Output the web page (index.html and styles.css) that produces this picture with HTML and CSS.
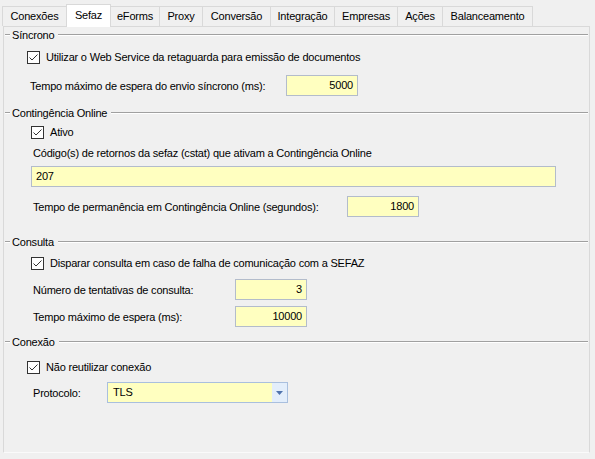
FILE: index.html
```html
<!DOCTYPE html>
<html lang="pt-BR">
<head>
<meta charset="utf-8">
<title>Configurações - Sefaz</title>
<link rel="stylesheet" href="styles.css">
</head>
<body>
<div class="window">
  <div class="tabs">
    <div class="tab w-conexoes">Conexões</div>
    <div class="tab tab-active w-sefaz">Sefaz</div>
    <div class="tab w-eforms">eForms</div>
    <div class="tab w-proxy">Proxy</div>
    <div class="tab w-conversao">Conversão</div>
    <div class="tab w-integracao">Integração</div>
    <div class="tab w-empresas">Empresas</div>
    <div class="tab w-acoes">Ações</div>
    <div class="tab tab-last w-balanc">Balanceamento</div>
  </div>
  <div class="panel">
    <div class="group-head"><span class="dash"></span><span class="group-title">Síncrono</span><span class="rule"></span></div>
    <div class="check-row mt-6 ind-23">
      <svg class="cb" width="13" height="13" viewBox="0 0 13 13"><rect x="0.5" y="0.5" width="12" height="12" fill="#fff" stroke="#333"/><path d="M2.5 6.5 L5 9 L10.5 3.5" fill="none" stroke="#333"/></svg>
      <span class="cb-label">Utilizar o Web Service da retaguarda para emissão de documentos</span>
    </div>
    <div class="field-row mt-10 ind-26">
      <span class="label lw-256">Tempo máximo de espera do envio síncrono (ms):</span>
      <div class="textbox num w-72">5000</div>
    </div>

    <div class="group-head mt-9"><span class="dash"></span><span class="group-title">Contingência Online</span><span class="rule"></span></div>
    <div class="check-row mt-3 ind-27">
      <svg class="cb" width="13" height="13" viewBox="0 0 13 13"><rect x="0.5" y="0.5" width="12" height="12" fill="#fff" stroke="#333"/><path d="M2.5 6.5 L5 9 L10.5 3.5" fill="none" stroke="#333"/></svg>
      <span class="cb-label">Ativo</span>
    </div>
    <div class="text-row mt-5 ind-29">Código(s) de retornos da sefaz (cstat) que ativam a Contingência Online</div>
    <div class="field-row mt-5 ind-27">
      <div class="textbox w-525">207</div>
    </div>
    <div class="field-row mt-9 ind-29">
      <span class="label lw-314">Tempo de permanência em Contingência Online (segundos):</span>
      <div class="textbox num w-72">1800</div>
    </div>

    <div class="group-head mt-17"><span class="dash"></span><span class="group-title">Consulta</span><span class="rule"></span></div>
    <div class="check-row mt-5 ind-27">
      <svg class="cb" width="13" height="13" viewBox="0 0 13 13"><rect x="0.5" y="0.5" width="12" height="12" fill="#fff" stroke="#333"/><path d="M2.5 6.5 L5 9 L10.5 3.5" fill="none" stroke="#333"/></svg>
      <span class="cb-label">Disparar consulta em caso de falha de comunicação com a SEFAZ</span>
    </div>
    <div class="field-row mt-8 ind-29">
      <span class="label lw-202">Número de tentativas de consulta:</span>
      <div class="textbox num w-72">3</div>
    </div>
    <div class="field-row mt-6 ind-29">
      <span class="label lw-202">Tempo máximo de espera (ms):</span>
      <div class="textbox num w-72">10000</div>
    </div>

    <div class="group-head mt-7"><span class="dash"></span><span class="group-title">Conexão</span><span class="rule"></span></div>
    <div class="check-row mt-9 ind-23">
      <svg class="cb" width="13" height="13" viewBox="0 0 13 13"><rect x="0.5" y="0.5" width="12" height="12" fill="#fff" stroke="#333"/><path d="M2.5 6.5 L5 9 L10.5 3.5" fill="none" stroke="#333"/></svg>
      <span class="cb-label">Não reutilizar conexão</span>
    </div>
    <div class="field-row mt-7 ind-29">
      <span class="label lw-74">Protocolo:</span>
      <div class="combo">
        <span class="combo-text">TLS</span>
        <span class="combo-btn"><svg width="7" height="4" viewBox="0 0 7 4"><path d="M0 0 H7 L3.5 4 Z" fill="#4f73ad"/></svg></span>
      </div>
    </div>
  </div>
</div>
</body>
</html>
```

FILE: styles.css
```css
body {
  margin: 0;
  background: #f0f0f0;
  font-family: "Liberation Sans", Arial, sans-serif;
  font-size: 11px;
  letter-spacing: -0.2px;
  color: #000;
}

.window {
  width: 595px;
  height: 459px;
}

/* Tabs */
.tabs {
  display: flex;
  align-items: flex-end;
  height: 26px;
  padding-left: 2px;
}

.tab {
  box-sizing: border-box;
  height: 20px;
  line-height: 19px;
  text-align: center;
  border-top: 1px solid #d9d9d9;
  border-left: 1px solid #d9d9d9;
  background: #f0f0f0;
  white-space: nowrap;
}

.tab-last {
  border-right: 1px solid #d9d9d9;
}

.tab-active {
  position: relative;
  z-index: 1;
  height: 23px;
  margin-bottom: -1px;
  line-height: 21px;
  background: #fff;
  border-right: 1px solid #d9d9d9;
}

.tab-active + .tab {
  margin-left: -1px;
}

.w-conexoes { width: 64px; }
.w-sefaz { width: 45px; }
.w-eforms { width: 49px; }
.w-proxy { width: 43px; }
.w-conversao { width: 68px; }
.w-integracao { width: 64px; }
.w-empresas { width: 63px; }
.w-acoes { width: 45px; }
.w-balanc { width: 91px; }

/* Panel */
.panel {
  box-sizing: border-box;
  margin-left: 3px;
  width: 587px;
  height: 427px;
  border: 1px solid #d9d9d9;
  border-bottom-color: #fafafa;
  background: #f0f0f0;
}

/* Group header (etched line with caption) */
.group-head {
  display: flex;
  align-items: center;
  height: 16px;
  padding-left: 1px;
  padding-right: 1px;
}

.dash,
.rule {
  height: 0;
  border-top: 1px solid #a0a0a0;
  border-bottom: 1px solid #fff;
}

.dash {
  width: 5px;
  margin-right: 2px;
}

.rule {
  flex: 1;
  margin-left: 4px;
}

.group-title {
  line-height: 16px;
  white-space: nowrap;
}

/* Rows */
.check-row {
  display: flex;
  align-items: center;
  height: 16px;
}

.cb {
  flex: none;
  display: block;
}

.cb-label {
  margin-left: 6px;
  white-space: nowrap;
}

.text-row {
  height: 16px;
  line-height: 16px;
  white-space: nowrap;
}

.field-row {
  display: flex;
  align-items: center;
  height: 21px;
}

.label {
  flex: none;
  white-space: nowrap;
}

.lw-256 { width: 256px; }
.lw-314 { width: 314px; }
.lw-202 { width: 202px; }
.lw-74 { width: 74px; }

.textbox {
  box-sizing: border-box;
  height: 21px;
  line-height: 19px;
  padding: 0 4px;
  background: #ffffc0;
  border: 1px solid #b3bccb;
  white-space: nowrap;
}

.textbox.num {
  text-align: right;
}

.w-72 { width: 72px; }
.w-525 { width: 525px; }

/* Combo box */
.combo {
  box-sizing: border-box;
  display: flex;
  width: 181px;
  height: 21px;
  border: 1px solid #a9bfde;
  background: #ffffc0;
}

.combo-text {
  flex: 1;
  line-height: 19px;
  padding-left: 5px;
}

.combo-btn {
  display: flex;
  align-items: center;
  justify-content: center;
  width: 15px;
  background: #e3eefb;
}

.combo-btn svg {
  display: block;
}

/* Spacing helpers */
.mt-3 { margin-top: 3px; }
.mt-5 { margin-top: 5px; }
.mt-6 { margin-top: 6px; }
.mt-7 { margin-top: 7px; }
.mt-8 { margin-top: 8px; }
.mt-9 { margin-top: 9px; }
.mt-10 { margin-top: 10px; }
.mt-17 { margin-top: 17px; }

.ind-23 { padding-left: 23px; }
.ind-26 { padding-left: 26px; }
.ind-27 { padding-left: 27px; }
.ind-29 { padding-left: 29px; }
```
